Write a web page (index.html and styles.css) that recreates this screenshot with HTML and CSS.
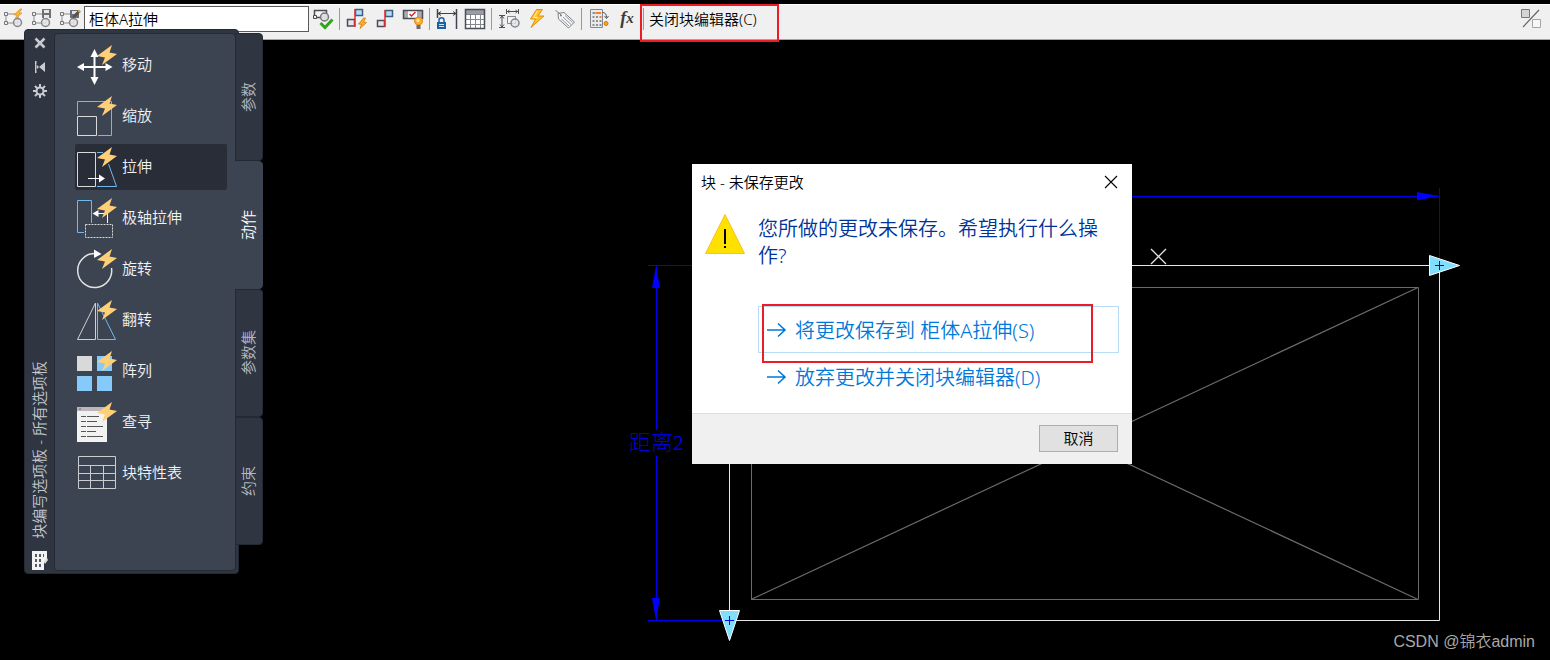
FILE: index.html
```html
<!DOCTYPE html>
<html lang="zh-CN">
<head>
    <meta charset="UTF-8">
    <meta name="viewport" content="width=device-width, initial-scale=1.0">
    <title>块编辑器</title>
    <link rel="stylesheet" href="styles.css">
</head>
<body>
    <svg class="defs" width="0" height="0" aria-hidden="true">
        <symbol id="bolt" viewBox="0 0 20 20">
            <path d="M15 0 L0 11 L8 12.5 L5 20 L20 9 L12.5 7.5 Z" fill="#ffcf78"/>
        </symbol>
        <symbol id="block" viewBox="0 0 24 24">
            <path d="M4 7h12v9H4z" fill="#f4f4f6" stroke="#8b8b90"/>
            <path d="M2.500 14.500h3v3h-3zM2.500 5.500h3v3h-3z" fill="#f0f0f0" stroke="#77777c"/>
            <circle cx="15.500" cy="15.500" r="4" fill="#e4e6ea" fill-opacity=".8" stroke="#85858a" stroke-width="1.500"/>
        </symbol>
        <symbol id="arrow" viewBox="0 0 20 16">
            <path d="M0 8H18M11 1.500L18 8L11 14.500" fill="none" stroke="#0078d7" stroke-width="1.600"/>
        </symbol>
    </svg>

    <header class="toolbar">
        <button class="tool" aria-label="编辑块定义">
            <svg viewBox="0 0 24 24"><use href="#block"/><path d="M18 2l-6 6h3l-2 4 7-6h-3l3-4z" fill="#ffb52e" stroke="#d98d14" stroke-width=".6"/></svg>
        </button>
        <button class="tool" aria-label="保存块">
            <svg viewBox="0 0 24 24"><use href="#block"/><path d="M12 2h9v9h-9z" fill="#6f6f74"/><path d="M14 3h5v3h-5zM14 8h5v3h-5z" fill="#e8e8e8"/></svg>
        </button>
        <button class="tool" aria-label="块另存为">
            <svg viewBox="0 0 24 24"><use href="#block"/><path d="M12 3h9v8h-9z" fill="#6b7078"/><path d="M14 4h5v3h-5z" fill="#dde6ee"/><path d="M14.500 11l1-3 5-5 2 2-5 5z" fill="#56514c"/><path d="M19.500 4l2 2 1.500-1.500-2-2z" fill="#f39a2b"/></svg>
        </button>
        <input class="block-name" type="text" value="柜体A拉伸" aria-label="块名称">
        <button class="tool" aria-label="测试块">
            <svg viewBox="0 0 24 24"><path d="M3.500 3.500h12v7h-12z" fill="#f6f6f8" stroke="#4c4c54" stroke-width="1.500"/><path d="M2.500 8.500h3v3h-3z" fill="#eee" stroke="#4c4c54"/><circle cx="13.500" cy="10" r="4" fill="#dcdee2" stroke="#77777c" stroke-width="1.500"/><path d="M9.500 16l4.500 4.500 7.500-8" fill="none" stroke="#32a51c" stroke-width="3"/></svg>
        </button>
        <span class="separator"></span>
        <button class="tool" aria-label="自动约束">
            <svg viewBox="0 0 24 24"><path d="M10.500 2.500h7v6h-7z" fill="#b5ddf8" stroke="#3c5f80" stroke-width="1.500"/><path d="M2.500 12.500h7v6.500h-7z" fill="#e4e6ea" stroke="#4c4c54" stroke-width="1.500"/><path d="M10 2v18" stroke="#ee2b2b" stroke-width="1.500"/><path d="M18.500 11l-5 6 3 .5-1.500 4 6.500-6-3-.5 2-4z" fill="#ffad1f" stroke="#c97405" stroke-width=".7"/></svg>
        </button>
        <button class="tool" aria-label="几何约束">
            <svg viewBox="0 0 24 24"><path d="M12.500 3.500h7v6h-7z" fill="#b5ddf8" stroke="#3c5f80" stroke-width="1.500"/><path d="M4.500 13.500h7v6h-7z" fill="#e4e6ea" stroke="#4c4c54" stroke-width="1.500"/><path d="M12 3v17" stroke="#ee2b2b" stroke-width="1.500"/></svg>
        </button>
        <button class="tool" aria-label="显示约束">
            <svg viewBox="0 0 24 24"><path d="M2.500 3.500h19v8h-19z" fill="#a9abb0"/><path d="M7 4h9v8H7z" fill="#fff"/><path d="M2.500 3.500h19v8h-19z" fill="none" stroke="#4c4c54" stroke-width="1.500"/><path d="M8.500 7l2 2 4-4" fill="none" stroke="#dc2929" stroke-width="1.500"/><circle cx="17.500" cy="14" r="4" fill="#ffad33" stroke="#e48a12"/><circle cx="17" cy="13.500" r="1.500" fill="#fff0b8"/><path d="M15.500 18h4v4h-4z" fill="#696d72"/></svg>
        </button>
        <span class="separator"></span>
        <button class="tool" aria-label="块参数">
            <svg viewBox="0 0 24 24"><path d="M2.500 2v9M21.500 2v20" stroke="#3f444c" stroke-width="1.500"/><path d="M3 6.500h18M6 4.500l-3 2 3 2M18 4.500l3 2-3 2" fill="none" stroke="#3f444c"/><path d="M4 16v-3c0-3 5-3 5 0v3" fill="none" stroke="#1d5fa5" stroke-width="1.500"/><path d="M2 15h9v7H2z" fill="#1d5fa5"/><path d="M4 17.500h5M4 19.500h5" stroke="#cfe3f7"/></svg>
        </button>
        <button class="tool" aria-label="块表">
            <svg viewBox="0 0 24 24"><path d="M2.500 2.500h19v19h-19z" fill="#fff"/><path d="M3 3h18v4H3z" fill="#9a9da3"/><path d="M3 7.500h18M3 12.500h18M3 17.500h18M7.500 7v15M12.500 7v15M17.500 7v15" stroke="#83868c"/><path d="M2.500 2.500h19v19h-19z" fill="none" stroke="#4a4e55" stroke-width="1.500"/></svg>
        </button>
        <span class="separator"></span>
        <button class="tool" aria-label="参数">
            <svg viewBox="0 0 24 24"><path d="M9.500 2v5M21.500 2v5M10 4.500h11M12.500 3l-2 1.500 2 1.500M18.500 3l2 1.500-2 1.500M2 8.500h6M2 20.500h6M5 9v11M3 11.500l2-2.500 2 2.500M3 17.500l2 2.500 2-2.500" fill="none" stroke="#4c4f56"/><path d="M10.500 9.500h8v7h-8z" fill="#f5f5f5" stroke="#83868c"/><circle cx="18" cy="16" r="4" fill="#e4e6ea" fill-opacity=".8" stroke="#83868c" stroke-width="1.500"/></svg>
        </button>
        <button class="tool" aria-label="动作">
            <svg viewBox="0 0 24 24"><path d="M11.500 2.500L5.500 12h5L6 20.500 19 9h-6l4.500-6.500z" fill="#ffc12e" stroke="#e0920f"/><path d="M12.500 4l-4 6.500h4" fill="none" stroke="#fff0a8"/></svg>
        </button>
        <button class="tool" aria-label="定义属性">
            <svg viewBox="0 0 24 24"><path d="M5 6.500l6-1L21.500 15l-6 6L5.500 12z" fill="#f7f7f7" stroke="#7d8087"/><path d="M10 10l8 7.500M12 8.500l7.500 7M8.500 12l7.500 7" stroke="#92959b"/><circle cx="8" cy="8.500" r="1" fill="#7d8087"/><path d="M8 8.500C7 5 4 6 2.500 3" fill="none" stroke="#7d8087"/></svg>
        </button>
        <span class="separator"></span>
        <button class="tool" aria-label="编写选项板">
            <svg viewBox="0 0 24 24"><path d="M3.500 2.500h12v18h-12z" fill="#e9eaec" stroke="#85888e"/><path d="M5.500 5h3v2h-3zM5.500 9h2v2h-2zM9 9h2v2H9zM5.500 13h2v2h-2zM9 13h2v2H9zM5.500 17h2v2h-2zM9 17h2v2H9zM12.500 13h2v2h-2zM12.500 17h2v2h-2z" fill="#8c9096"/><path d="M9 5h5v2H9zM12.500 9h2v2h-2z" fill="#f3812a"/><path d="M15.500 5.500c3 0 4 2 4 5M17.500 9l2 2.500 2-2.500" fill="none" stroke="#4c4f56"/><circle cx="19" cy="16.500" r="2" fill="#ffa21f" stroke="#cf7a08"/></svg>
        </button>
        <button class="tool fx" aria-label="参数管理器">f<small>x</small></button>
        <span class="separator"></span>
        <div class="marked">
            <button class="close-editor">关闭块编辑器(C)</button>
            <span class="mark mark-close"></span>
        </div>
        <button class="tool tool-last" aria-label="可见性模式">
            <svg viewBox="0 0 24 24"><path d="M2.500 2.500h8v8h-8z" fill="#d5d5d5" stroke="#77777c"/><path d="M13.500 12.500h8v8h-8z" fill="#f7f7f7" stroke="#a5a5a8"/><path d="M4 20L20 3" stroke="#66666b" stroke-width="1.200"/></svg>
        </button>
    </header>

    <main class="canvas">
        <svg class="drawing" viewBox="0 40 1550 620" preserveAspectRatio="xMinYMin meet">
            <g fill="none" stroke="#6b6b6b">
                <path d="M751.500 287.500H1418.500V599.500H751.500Z"/>
                <path d="M751 599.500L1418 287.500M751 287.500L1418 599.500" stroke-width="1.200"/>
            </g>
            <path d="M729.500 265.500H1439.500V620.500H729.500Z" fill="none" stroke="#e6e6e6"/>
            <path d="M1151 249L1166 264M1166 249L1151 264" stroke="#e6e6e6" stroke-width="1.300"/>
            <g stroke="#0000f0" shape-rendering="crispEdges">
                <path d="M648 265.500H729M648 620.500H729M656.500 266V430M656.500 456V620"/>
                <path d="M730 196.500H1439M1439.500 188V265"/>
            </g>
            <path d="M656 266L660 288H652ZM656 620L660 598H652ZM1439 196L1417 192V200.500Z" fill="#0000ff"/>
            <text class="dimension" x="629" y="450">距离2</text>
            <g fill="#80dfff" stroke="#ffffff">
                <path d="M1429.500 255.500V275.500L1459.500 265.500Z"/>
                <path d="M719.500 610.500H739.500L729.500 640.500Z"/>
            </g>
            <path d="M1435 265.500H1444M1439.500 261V270M725 620.500H734M729.500 616V625" stroke="#0000ff"/>
        </svg>

        <aside class="palette">
            <div class="palette-window">
                <div class="palette-title">
                    <button class="palette-control" aria-label="关闭"><svg viewBox="0 0 14 14"><path d="M2.500 2.500l9 9M11.500 2.500l-9 9" stroke="#c8ccd2" stroke-width="2.500"/></svg></button>
                    <button class="palette-control" aria-label="自动隐藏"><svg viewBox="0 0 14 14"><path d="M2 1v12h1.500V1zM3 4l3 3-3 3zM12 2v10L6 7z" fill="#c8ccd2"/></svg></button>
                    <button class="palette-control" aria-label="特性"><svg viewBox="0 0 14 14"><circle cx="7" cy="7" r="3.500" fill="none" stroke="#c8ccd2" stroke-width="2"/><path d="M7 0v3M7 11v3M0 7h3M11 7h3M2 2l2.500 2.500M9.500 9.500L12 12M12 2L9.500 4.500M4.500 9.500L2 12" stroke="#c8ccd2" stroke-width="2"/></svg></button>
                    <h2 class="vertical palette-name">块编写选项板 - 所有选项板</h2>
                    <svg class="palette-icon" viewBox="0 0 16 20"><path d="M0 0h15v8l-3 4v7H0z" fill="#f2f2f2"/><path d="M3 3h2v3H3zM7 3h2v3H7zM3 8h2v3H3zM7 8h2v3H7zM3 13h2v3H3zM7 13h2v3H7z" fill="#555a63"/><path d="M11 3h1v3h-1z" fill="#555a63"/><path d="M15 7l1 2-3 4-1-2z" fill="#d9dbe0"/></svg>
                </div>
                <div class="palette-items">
                    <button class="item">
                        <svg viewBox="0 0 40 46"><path d="M17.500 11v28M4 25h28" stroke="#fff" stroke-width="2"/><path d="M17.500 7l4 8h-8zM17.500 43l4-8h-8zM0 25l7-4v8zM35.500 25l-7-4v8z" fill="#fff"/><use href="#bolt" x="20" y="3" width="20" height="20"/></svg>
                        <span>移动</span>
                    </button>
                    <button class="item">
                        <svg viewBox="0 0 40 46"><path d="M.5 22V8.500H34.500V42.500H21" fill="none" stroke="#6fb9ee"/><path d="M.5 23.500h19v19H.5z" fill="none" stroke="#d9d9d9"/><use href="#bolt" x="20" y="3" width="20" height="20"/></svg>
                        <span>缩放</span>
                    </button>
                    <button class="item selected">
                        <svg viewBox="0 0 40 46"><path d="M20 8.500h6M31.500 20L39.500 42.500H20" fill="none" stroke="#6fb9ee"/><path d="M.5 8.500h18v34H.5z" fill="none" stroke="#d9d9d9"/><path d="M11 34.500h12" stroke="#fff"/><path d="M28 34.500l-6-4v8z" fill="#fff"/><use href="#bolt" x="20" y="3" width="20" height="20"/></svg>
                        <span>拉伸</span>
                    </button>
                    <button class="item">
                        <svg viewBox="0 0 40 46"><path d="M7 37.500H.5V5.500h14V28" fill="none" stroke="#6fb9ee"/><path d="M8.500 29.500h27v13h-27z" fill="none" stroke="#d9d9d9" stroke-dasharray="2 1"/><path d="M20 18.500h10.500V28" fill="none" stroke="#fff"/><path d="M15.500 18.500l6-3.500v7z" fill="#fff"/><use href="#bolt" x="20" y="3" width="20" height="20"/></svg>
                        <span>极轴拉伸</span>
                    </button>
                    <button class="item">
                        <svg viewBox="0 0 40 46"><path d="M17.500 7.500A17 17 0 1 0 34.500 22" fill="none" stroke="#e3e3e3" stroke-width="1.500"/><path d="M17 3.500v8.500l7.500-4z" fill="#fff"/><use href="#bolt" x="20" y="3" width="20" height="20"/></svg>
                        <span>旋转</span>
                    </button>
                    <button class="item">
                        <svg viewBox="0 0 40 46"><path d="M18.500 6V42.500H.5Z" fill="none" stroke="#d0d0d0"/><path d="M20.500 6V42.500H38.500Z" fill="none" stroke="#6fb9ee"/><use href="#bolt" x="20" y="3" width="20" height="20"/></svg>
                        <span>翻转</span>
                    </button>
                    <button class="item">
                        <svg viewBox="0 0 40 46"><path d="M0 8h15v15H0z" fill="#d9d9d9"/><path d="M20 8h15v15H20zM0 28h15v15H0zM20 28h15v15H20z" fill="#86cafc"/><use href="#bolt" x="20" y="3" width="20" height="20"/></svg>
                        <span>阵列</span>
                    </button>
                    <button class="item">
                        <svg viewBox="0 0 40 46"><path d="M0 8h30v35H0z" fill="#f2f2f2"/><path d="M0 8h30v4H0z" fill="#bcb6ba"/><path d="M2 10h2" stroke="#666"/><path d="M4 17.500h5M10 17.500h12M4 22.500h5M10 22.500h10M4 27.500h5M10 27.500h16M4 32.500h5M10 32.500h9M4 37.500h5M10 37.500h16" stroke="#555"/><use href="#bolt" x="20" y="3" width="20" height="20"/></svg>
                        <span>查寻</span>
                    </button>
                    <button class="item">
                        <svg viewBox="0 0 40 46"><path d="M1.500 6.500h37v32h-37zM1.500 15.500h37M1.500 23.500h37M1.500 30.500h37M13.500 15.500v23M26.500 15.500v23" fill="none" stroke="#c9ccd1"/></svg>
                        <span>块特性表</span>
                    </button>
                </div>
            </div>
            <nav class="tabs">
                <button class="tab"><span class="vertical">参数</span></button>
                <button class="tab active"><span class="vertical">动作</span></button>
                <button class="tab"><span class="vertical">参数集</span></button>
                <button class="tab"><span class="vertical">约束</span></button>
            </nav>
        </aside>

        <section class="dialog" role="dialog" aria-labelledby="dialog-title">
            <div class="dialog-header">
                <h1 id="dialog-title">块 - 未保存更改</h1>
                <button class="dialog-close" aria-label="关闭"><svg viewBox="0 0 14 14"><path d="M1 1l12 12M13 1L1 13" stroke="#000" stroke-width="1.100"/></svg></button>
            </div>
            <div class="dialog-body">
                <svg class="warning" viewBox="0 0 40 40"><path d="M20 .5L39.500 39.500H.5Z" fill="#ffe100" stroke="#ffc01e"/><path d="M20 15v15M20 32v2" stroke="#000" stroke-width="2"/></svg>
                <div class="dialog-content">
                    <p class="question">您所做的更改未保存。希望执行什么操作?</p>
                    <div class="marked">
                        <button class="option focused"><svg><use href="#arrow"/></svg>将更改保存到 柜体A拉伸(S)</button>
                        <span class="mark mark-save"></span>
                    </div>
                    <button class="option"><svg><use href="#arrow"/></svg>放弃更改并关闭块编辑器(D)</button>
                </div>
            </div>
            <div class="dialog-footer">
                <button class="cancel">取消</button>
            </div>
        </section>

        <p class="watermark">CSDN @锦衣admin</p>
    </main>
</body>
</html>
```
FILE: styles.css
```css
* {
    box-sizing: border-box;
}

body {
    display: flex;
    flex-direction: column;
    min-height: 100vh;
    margin: 0;
    padding-top: 4px;
    background-color: #000;
    font-family: "Noto Sans", "Noto Sans CJK SC", sans-serif;
    font-size: 15px;
    font-weight: 350;
    overflow: hidden;
}

button {
    margin: 0;
    padding: 0;
    border: none;
    background: none;
    color: inherit;
    font: inherit;
    cursor: pointer;
}

svg {
    display: block;
    flex: none;
}

h1,
h2,
p {
    margin: 0;
    font-size: 15px;
    font-weight: inherit;
}

.defs {
    position: absolute;
}

.marked {
    position: relative;
}

.mark {
    position: absolute;
    border: 2px solid #ed1c24;
    pointer-events: none;
    z-index: 2;
}

/* toolbar */
.toolbar {
    display: flex;
    align-items: flex-start;
    height: 36px;
    padding-top: 1px;
    background-color: #f0f0f0;
    border-top: 1px solid #fff;
    border-bottom: 1px solid #a5a5a5;
}

.tool {
    display: flex;
    align-items: center;
    justify-content: center;
    width: 28px;
    height: 26px;
}

.tool svg {
    width: 24px;
    height: 24px;
}

.tool-last {
    margin-left: auto;
    margin-right: 5px;
}

.block-name {
    width: 225px;
    height: 26px;
    padding: 0 4px 2px;
    border: 1px solid #5a5a5a;
    background-color: #fff;
    color: #000;
    font: inherit;
    outline: none;
}

.separator {
    width: 1px;
    height: 22px;
    margin: 2px 3px 0 2px;
    background-color: #9a9a9a;
}

.fx {
    padding-bottom: 2px;
    color: #3c3c40;
    font: italic bold 18px "Liberation Serif", serif;
}

.fx small {
    font-size: 15px;
}

.close-editor {
    height: 26px;
    padding: 0 22px 2px 2px;
}

.mark-close {
    top: -2px;
    right: 0;
    bottom: -10px;
    left: -7px;
}

/* drawing area */
.canvas {
    position: relative;
    flex: 1;
}

.drawing {
    width: 100%;
}

.dimension {
    fill: #0000d8;
    font-family: "Liberation Serif", "Noto Sans CJK SC", serif;
    font-size: 22px;
    font-weight: 300;
}

.watermark {
    position: absolute;
    right: 15px;
    bottom: 8px;
    color: #a9a9a9;
    font-family: "Liberation Sans", "Noto Sans CJK SC", sans-serif;
    font-size: 16px;
}

/* palette */
.palette {
    position: absolute;
    top: -11px;
    left: 24px;
    display: flex;
    align-items: flex-start;
    color: #f2f3f5;
}

.palette-window {
    display: flex;
    padding: 3px 2px 2px 0;
    border: 1px solid #232a35;
    border-radius: 4px;
    background-color: #2f3541;
}

.palette-title {
    display: flex;
    flex-direction: column;
    align-items: center;
    width: 29px;
    color: #c3c7ce;
}

.palette-control {
    display: flex;
    align-items: center;
    justify-content: center;
    width: 24px;
    height: 24px;
}

.palette-control:first-child {
    margin-top: -2px;
}

.palette-control svg {
    width: 14px;
    height: 14px;
}

.vertical {
    writing-mode: vertical-rl;
    text-orientation: sideways;
    transform: rotate(180deg);
    padding-left: 2px;
    line-height: 20px;
    white-space: nowrap;
}

.palette-name {
    margin-top: auto;
    margin-bottom: 12px;
}

.palette-icon {
    width: 16px;
    height: 20px;
}

.palette-items {
    display: flex;
    flex-direction: column;
    gap: 5px;
    width: 182px;
    padding: 8px 8px 74px 20px;
    border: 1px solid #242b36;
    border-radius: 4px;
    background-color: #3c4452;
}

.item {
    display: flex;
    align-items: center;
    gap: 5px;
    height: 46px;
    padding-left: 2px;
    border-radius: 2px;
    text-align: left;
}

.item svg {
    width: 40px;
    height: 46px;
}

.item span {
    padding-bottom: 4px;
}

.item.selected {
    background-color: #282d38;
}

.tabs {
    display: flex;
    flex-direction: column;
    margin-top: 4px;
    margin-left: -4px;
    z-index: 1;
}

.tab {
    display: flex;
    align-items: center;
    justify-content: center;
    width: 28px;
    height: 128px;
    border: 1px solid #232a35;
    border-radius: 0 4px 4px 0;
    background-color: #2f3541;
    color: #b4b8c0;
}

.tab.active {
    border-color: #3c4452;
    background-color: #3c4452;
    color: #fff;
}

/* dialog */
.dialog {
    position: absolute;
    top: 124px;
    left: 692px;
    width: 440px;
    background-color: #fff;
    color: #000;
}

.dialog-header {
    display: flex;
    align-items: center;
    justify-content: space-between;
    height: 36px;
    padding: 0 14px 0 9px;
}

.dialog-header h1 {
    padding-bottom: 2px;
}

.dialog-close svg {
    width: 14px;
    height: 14px;
}

.dialog-body {
    display: flex;
    gap: 13px;
    padding: 14px 13px 13px;
}

.warning {
    width: 40px;
    height: 40px;
}

.dialog-content {
    flex: 1;
}

.question {
    padding-top: 1px;
    margin-bottom: 37px;
    color: #003399;
    font-size: 20px;
    line-height: 27px;
}

.option {
    display: flex;
    align-items: center;
    gap: 8px;
    width: 100%;
    height: 47px;
    padding-left: 8px;
    border: 1px solid transparent;
    color: #0078d7;
    font-size: 20px;
    text-align: left;
}

.option svg {
    width: 20px;
    height: 16px;
}

.option.focused {
    border-color: #b9dcf5;
}

.mark-save {
    top: -2px;
    right: 26px;
    bottom: -10px;
    left: 4px;
}

.dialog-footer {
    display: flex;
    justify-content: flex-end;
    padding: 11px 14px 12px;
    border-top: 1px solid #dfdfdf;
    background-color: #f0f0f0;
}

.cancel {
    width: 79px;
    height: 27px;
    padding-bottom: 2px;
    border: 1px solid #adadad;
    background-color: #e1e1e1;
}
```
